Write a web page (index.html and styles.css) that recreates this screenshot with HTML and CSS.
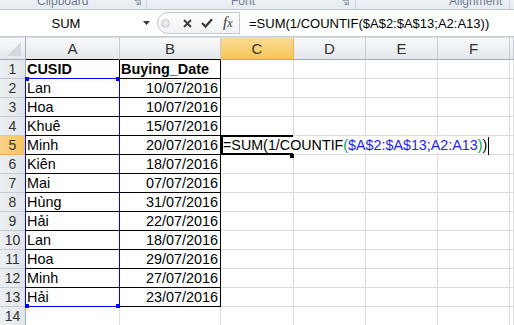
FILE: index.html
```html
<!DOCTYPE html>
<html lang="vi">
<head>
    <meta charset="UTF-8">
    <meta name="viewport" content="width=device-width, initial-scale=1.0">
    <title>Đếm khách hàng</title>
    <link rel="stylesheet" href="styles.css">
</head>
<body>
    <!-- phần dưới của ribbon -->
    <div class="ribbon">
        <div class="group g-clip">
            <span class="label">Clipboard</span>
            <svg class="launcher" width="7" height="6" viewBox="0 0 7 6"><path d="M0.5 0.5H6.5V5.5" fill="none" stroke="#9aa6b5"/><path d="M2 1.5L5 4.5M5 2V4.5H2.5" fill="none" stroke="#7d8ba0"/></svg>
        </div>
        <div class="group g-font">
            <span class="label">Font</span>
            <svg class="launcher" width="7" height="6" viewBox="0 0 7 6"><path d="M0.5 0.5H6.5V5.5" fill="none" stroke="#9aa6b5"/><path d="M2 1.5L5 4.5M5 2V4.5H2.5" fill="none" stroke="#7d8ba0"/></svg>
        </div>
        <div class="group g-align">
            <span class="label">Alignment</span>
        </div>
    </div>

    <!-- thanh công thức -->
    <div class="formula-bar">
        <div class="name-box">
            <span class="name">SUM</span>
            <svg class="drop" width="7" height="4" viewBox="0 0 7 4"><polygon points="0,0 7,0 3.5,4" fill="#3a3a3a"/></svg>
        </div>
        <div class="fx-buttons">
            <span class="grip"></span>
            <svg class="btn-x" width="9" height="9" viewBox="0 0 9 9"><path d="M1 1L8 8M8 1L1 8" stroke="#3a3a3a" stroke-width="1.8"/></svg>
            <svg class="btn-ok" width="12" height="10" viewBox="0 0 12 10"><path d="M1 5L4.5 8.6L11 1.2" fill="none" stroke="#3a3a3a" stroke-width="2.2"/></svg>
            <span class="fx">f<span>x</span></span>
        </div>
        <div class="formula">=SUM(1/COUNTIF($A$2:$A$13;A2:A13))</div>
    </div>

    <!-- bảng tính -->
    <div class="sheet">
        <div class="range"></div>
        <span class="handle h-tl"></span>
        <span class="handle h-tr"></span>
        <span class="handle h-bl"></span>
        <span class="handle h-br"></span>

        <div class="active-frame"></div>
        <div class="editor">=SUM(1/COUNTIF<span class="p2">(</span><span class="ref">$A$2:$A$13;A2:A13</span><span class="p2">)</span>)<span class="caret"></span></div>
        <span class="fill-handle"></span>
    </div>

    <script>
        // dữ liệu cột A, B
        const data = [
            ['CUSID', 'Buying_Date'],
            ['Lan', '10/07/2016'],
            ['Hoa', '10/07/2016'],
            ['Khuê', '15/07/2016'],
            ['Minh', '20/07/2016'],
            ['Kiên', '18/07/2016'],
            ['Mai', '07/07/2016'],
            ['Hùng', '31/07/2016'],
            ['Hải', '22/07/2016'],
            ['Lan', '18/07/2016'],
            ['Hoa', '29/07/2016'],
            ['Minh', '27/07/2016'],
            ['Hải', '23/07/2016']
        ];
        const cols = ['A', 'B', 'C', 'D', 'E', 'F', ''];

        const sheet = document.querySelector('.sheet');
        function addCell(cls, text) {
            const d = document.createElement('div');
            d.className = 'cell ' + cls;
            d.textContent = text;
            sheet.appendChild(d);
        }

        // tiêu đề cột
        addCell('corner', '');
        cols.forEach(c => {
            let cls = 'ch';
            if (c === 'C') cls += ' sel';
            if (c === 'A' || c === 'B') cls += ' tbh';
            addCell(cls, c);
        });

        // các hàng
        for (let r = 1; r <= 14; r++) {
            const row = data[r - 1];
            addCell('rh' + (r === 5 ? ' sel' : ''), r);
            if (row) {
                addCell('tb' + (r === 1 ? ' b' : ''), row[0]);
                addCell('tb' + (r === 1 ? ' b' : ' r'), row[1]);
            } else {
                addCell('', '');
                addCell('', '');
            }
            for (let i = 0; i < 5; i++) addCell('', '');
        }
    </script>
</body>
</html>
```

FILE: styles.css
```css
* {
    margin: 0;
    padding: 0;
    box-sizing: border-box;
}

body {
    font-family: 'Liberation Sans', Arial, sans-serif;
    background: #fff;
    color: #000;
    width: 514px;
    height: 325px;
    overflow: hidden;
}

/* ribbon */
.ribbon {
    display: flex;
    height: 10px;
    background: linear-gradient(#eef1f5, #e6ebf1);
    border-bottom: 1px solid #bcc6d2;
    overflow: hidden;
}

.group {
    position: relative;
    height: 9px;
    border-right: 1px solid #c9d1dc;
}

.g-clip { width: 147px; }
.g-font { width: 209px; }
.g-align { width: 154px; }

.label {
    position: absolute;
    top: -5px;
    font-size: 12px;
    line-height: 12px;
    color: #6d7e95;
    white-space: nowrap;
}

.g-clip .label { left: 37px; }
.g-font .label { left: 84px; }
.g-align .label { left: 93px; }

.launcher {
    position: absolute;
    top: 0;
}

.g-clip .launcher { left: 134px; }
.g-font .launcher { left: 195px; }

/* thanh công thức */
.formula-bar {
    display: flex;
    align-items: center;
    height: 27px;
    border-bottom: 1px solid #c5ccd5;
    background: #fff;
}

.name-box {
    display: flex;
    align-items: center;
    width: 157px;
    height: 100%;
}

.name {
    width: 132px;
    text-align: center;
    font-size: 13px;
    padding-top: 1px;
}

.drop {
    margin-left: 11px;
}

.fx-buttons {
    display: flex;
    align-items: center;
    width: 83px;
    height: 22px;
    border: 1px solid #c3c9d1;
    border-radius: 11px 0 0 11px;
    background: linear-gradient(#fdfdfd, #f0f2f4);
    padding-left: 3px;
}

.grip {
    width: 9px;
    height: 9px;
    border-radius: 50%;
    background: radial-gradient(circle at 50% 40%, #f4f5f7, #cdd2d8);
    border: 1px solid #c9ced5;
}

.btn-x { margin-left: 13px; }
.btn-ok { margin-left: 9px; }

.fx {
    margin-left: 10px;
    font-family: 'Liberation Serif', 'Times New Roman', serif;
    font-style: italic;
    font-size: 15px;
    color: #333;
    line-height: 15px;
}

.fx span {
    font-size: 12px;
}

.formula {
    padding-left: 9px;
    font-size: 13px;
    padding-top: 1px;
    white-space: nowrap;
}

/* bảng tính */
.sheet {
    position: relative;
    display: grid;
    grid-template-columns: 26px 94px 101px 73px 72px 72px 72px 4px;
    grid-template-rows: 23px;
    grid-auto-rows: 19px;
}

.cell {
    border-right: 1px solid #dadcdd;
    border-bottom: 1px solid #dadcdd;
    font-size: 14.4px;
    line-height: 19px;
    padding: 0 1px;
    white-space: nowrap;
    overflow: hidden;
}

.corner,
.ch {
    background: linear-gradient(#f8f9fa, #e3e7eb);
    border-top: 1px solid #d9dde2;
    border-right: 1px solid #c5cbd2;
    border-bottom: 1px solid #9eabb9;
}

.corner {
    position: relative;
    border-right-color: #9eabb9;
}

.corner::after {
    content: '';
    position: absolute;
    right: 4px;
    bottom: 3px;
    border-left: 14px solid transparent;
    border-bottom: 14px solid #d3d8de;
}

.ch {
    text-align: center;
    font-size: 15px;
    line-height: 21px;
    color: #333;
    padding: 0;
}

.rh {
    background: linear-gradient(90deg, #eceff2, #e2e6ea);
    border-right: 1px solid #9eabb9;
    border-bottom: 1px solid #c5cbd2;
    text-align: center;
    font-size: 14px;
    color: #333;
    padding: 0;
}

.ch.sel {
    background: linear-gradient(#fbdb95, #f8c657);
    border-bottom-color: #f29b3a;
    border-right-color: #efb25a;
}

.rh.sel {
    background: linear-gradient(90deg, #f9d48a, #f6c35c);
    border-right-color: #f29b3a;
    border-bottom-color: #efb25a;
}

.ch.tbh {
    border-bottom-color: #000;
}

.tb {
    border-right-color: #000;
    border-bottom-color: #000;
}

.b {
    font-weight: bold;
}

.r {
    text-align: right;
    padding-right: 2px;
}

/* vùng tham chiếu A2:A13 */
.range {
    position: absolute;
    left: 25px;
    top: 41px;
    width: 95px;
    height: 229px;
    border: 1px solid #0000ff;
    z-index: 2;
}

.handle {
    position: absolute;
    width: 4px;
    height: 4px;
    background: #0000ff;
    z-index: 3;
}

.h-tl { left: 25px; top: 40px; }
.h-tr { left: 116px; top: 40px; }
.h-bl { left: 25px; top: 267px; }
.h-br { left: 116px; top: 267px; }

/* ô C5 đang sửa */
.active-frame {
    position: absolute;
    left: 221px;
    top: 98px;
    width: 72px;
    height: 20px;
    border: 2px solid #000;
    border-right: none;
    z-index: 2;
}

.editor {
    position: absolute;
    left: 223px;
    top: 100px;
    width: 285px;
    height: 16px;
    background: #fff;
    font-size: 14.3px;
    line-height: 17px;
    white-space: nowrap;
    z-index: 3;
}

.p2 {
    color: #00a05a;
}

.ref {
    color: #2222ff;
}

.caret {
    display: inline-block;
    width: 1px;
    height: 18px;
    margin-left: 1px;
    vertical-align: top;
    background: #000;
}

.fill-handle {
    position: absolute;
    left: 290px;
    top: 117px;
    width: 4px;
    height: 4px;
    background: #000;
    z-index: 4;
}
```
